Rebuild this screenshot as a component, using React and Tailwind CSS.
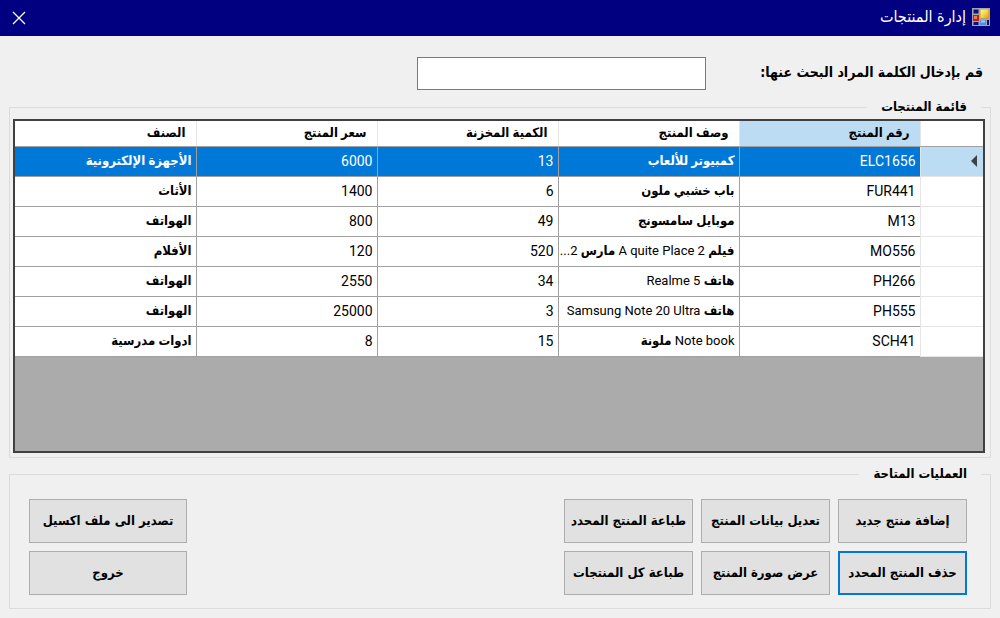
import React from "react";

const columns = ["رقم المنتج", "وصف المنتج", "الكمية المخزنة", "سعر المنتج", "الصنف"];

const rows = [
  ["ELC1656", "كمبيوتر للألعاب", "13", "6000", "الأجهزة الإلكترونية"],
  ["FUR441", "باب خشبي ملون", "6", "1400", "الأثاث"],
  ["M13", "موبايل سامسونج", "49", "800", "الهواتف"],
  ["MO556", "فيلم A quite Place 2 مارس 2...", "520", "120", "الأفلام"],
  ["PH266", "هاتف Realme 5", "34", "2550", "الهواتف"],
  ["PH555", "هاتف Samsung Note 20 Ultra", "3", "25000", "الهواتف"],
  ["SCH41", "Note book ملونة", "15", "8", "ادوات مدرسية"],
];

function MixedText({ text }) {
  const parts = text.split(/([\u0600-\u06FF]+(?:\s+[\u0600-\u06FF]+)*)/);
  return parts.filter(Boolean).map((part, i) =>
    /[\u0600-\u06FF]/.test(part) ? (
      <span key={i} className="font-bold">{part}</span>
    ) : (
      <React.Fragment key={i}>{part}</React.Fragment>
    )
  );
}

function AppIcon() {
  return (
    <svg viewBox="0 0 18 18" className="h-[18px] w-[18px]" aria-hidden="true">
      <defs>
        <linearGradient id="gold" x1="0" y1="0" x2="1" y2="1">
          <stop offset="0" stopColor="#fff6b0" />
          <stop offset="0.5" stopColor="#f9d548" />
          <stop offset="1" stopColor="#d9a010" />
        </linearGradient>
      </defs>
      <rect width="18" height="18" fill="#a5a5b0" />
      <rect x="1.5" y="1.5" width="5" height="4" fill="#0a1478" />
      <rect x="8" y="1" width="9" height="9.5" fill="#c99a20" />
      <rect x="8.5" y="1.5" width="8" height="8.5" fill="url(#gold)" />
      <rect x="1" y="7" width="6" height="6" fill="#b82418" />
      <rect x="2" y="8" width="3" height="3" fill="#ef7462" />
      <rect x="1.5" y="14" width="5" height="3" fill="#0a1478" />
      <rect x="8" y="12" width="6" height="5" fill="#4d8fe8" />
      <rect x="9" y="12.5" width="4" height="2" fill="#a2ccfa" />
      <rect x="15" y="12" width="2" height="5" fill="#0a1478" />
    </svg>
  );
}

function ActionButton({ children, wide, active }) {
  return (
    <button
      type="button"
      className={
        "h-11 whitespace-nowrap bg-[#e1e1e1] text-[13px] font-bold " +
        (wide ? "w-[158px] " : "w-[129px] ") +
        (active ? "border-2 border-[#0078d7]" : "border border-[#adadad]")
      }
    >
      {children}
    </button>
  );
}

export default function App() {
  return (
    <div
      dir="rtl"
      className="flex min-h-screen flex-col bg-[#f0f0f0] font-['DejaVu_Sans_Condensed','DejaVu_Sans',sans-serif] text-black"
    >
      <header className="flex h-9 items-center justify-between bg-[#000080] px-2.5 text-white">
        <h1 className="flex items-center gap-1.5 pb-0.5 text-base">
          <AppIcon />
          إدارة المنتجات
        </h1>
        <button type="button" aria-label="إغلاق" className="p-0.5">
          <svg viewBox="0 0 14 14" className="h-3.5 w-3.5" stroke="white" strokeWidth="1.3" aria-hidden="true">
            <path d="M1 1L13 13M13 1L1 13" />
          </svg>
        </button>
      </header>

      <main className="flex grow flex-col px-[9px] pb-[9px]">
        <div className="flex items-center px-2 pb-[7px] pt-[21px]">
          <label htmlFor="search" className="w-[220px] whitespace-nowrap pb-1 text-sm font-bold">
            قم بإدخال الكلمة المراد البحث عنها:
          </label>
          <input id="search" type="text" className="ms-[57px] h-[33px] w-[289px] border border-[#7a7a7a] bg-white px-2 outline-none" />
        </div>

        <fieldset className="flex grow flex-col border border-[#dcdcdc] pb-1 pe-[3px] ps-[5px]">
          <legend className="ms-1 h-5 px-3.5 text-[13px] font-bold leading-5">قائمة المنتجات</legend>
          <div className="mt-0.5 min-h-[334px] grow border-2 border-[#404040] bg-[#ababab]">
            <table className="w-full table-fixed border-collapse bg-white font-[Roboto,'DejaVu_Sans_Condensed','DejaVu_Sans',sans-serif]">
              <colgroup>
                <col className="w-[63px]" />
                <col /><col /><col /><col /><col />
              </colgroup>
              <thead>
                <tr className="h-[25px]">
                  <td className="border-b border-b-[#a0a0a0]" />
                  {columns.map((c, i) => (
                    <th
                      key={c}
                      scope="col"
                      className={
                        "whitespace-nowrap border-b border-s border-b-[#a0a0a0] border-s-[#e5e5e5] p-0 ps-2.5 text-start text-[13px] font-bold leading-5 " +
                        (i === 0 ? "bg-[#bcdcf4]" : "bg-white")
                      }
                    >
                      {c}
                    </th>
                  ))}
                </tr>
              </thead>
              <tbody>
                {rows.map((row, r) => (
                  <tr key={row[0]} className="h-[30px]">
                    <td className={"border-b border-b-[#e5e5e5] p-0 ps-1.5 " + (r === 0 ? "bg-[#bcdcf4]" : "bg-white")}>
                      {r === 0 && (
                        <svg viewBox="0 0 6 12" className="h-3 w-1.5" aria-hidden="true">
                          <path d="M6 0V12L0 6Z" fill="#404040" />
                        </svg>
                      )}
                    </td>
                    {row.map((cell, i) => (
                      <td
                        key={i}
                        className={
                          "overflow-hidden whitespace-nowrap border-b border-b-[#a0a0a0] p-0 ps-1 leading-6 " +
                          (i === 0 ? "border-s border-s-[#e5e5e5] " : "border-s border-s-[#a0a0a0] ") +
                          (i === 1 || i === 4 ? "text-[13px] " : "text-sm ") +
                          (r === 0 ? "bg-[#0078d7] text-white" : "")
                        }
                      >
                        <MixedText text={cell} />
                      </td>
                    ))}
                  </tr>
                ))}
              </tbody>
            </table>
          </div>
        </fieldset>

        <fieldset className="mt-1.5 border border-[#dcdcdc] pb-[13px] pe-[19px] ps-[23px]">
          <legend className="-ms-3.5 h-5 px-3.5 text-[13px] font-bold leading-5">العمليات المتاحة</legend>
          <div className="flex justify-between pt-[15px]">
            <div className="grid grid-cols-3 gap-2">
              <ActionButton>إضافة منتج جديد</ActionButton>
              <ActionButton>تعديل بيانات المنتج</ActionButton>
              <ActionButton>طباعة المنتج المحدد</ActionButton>
              <ActionButton active>حذف المنتج المحدد</ActionButton>
              <ActionButton>عرض صورة المنتج</ActionButton>
              <ActionButton>طباعة كل المنتجات</ActionButton>
            </div>
            <div className="grid gap-2">
              <ActionButton wide>تصدير الى ملف اكسيل</ActionButton>
              <ActionButton wide>خروج</ActionButton>
            </div>
          </div>
        </fieldset>
      </main>
    </div>
  );
}
